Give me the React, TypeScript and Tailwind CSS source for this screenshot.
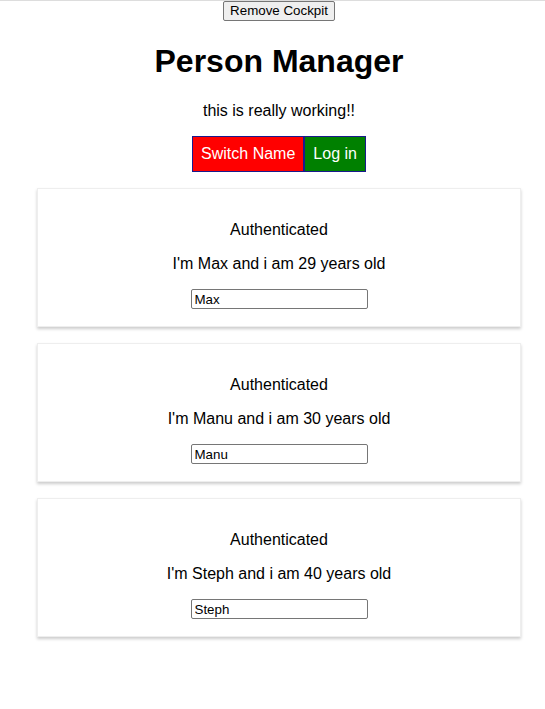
import React, { useState } from 'react';

interface Person {
  id: string;
  name: string;
  age: number;
}

const initialPersons: Person[] = [
  { id: 'a1', name: 'Max', age: 29 },
  { id: 'a2', name: 'Manu', age: 30 },
  { id: 'a3', name: 'Steph', age: 40 },
];

const PersonCard: React.FC<{ person: Person; onChange: (v: string) => void }> = ({ person, onChange }) => {
  return (
    <div className="w-[484px] mx-auto my-4 p-4 border border-[#eee] shadow-[0_2px_3px_#ccc] text-center">
      <p className="my-4 leading-[18px]">Authenticated</p>
      <p className="my-4 leading-[18px]">
        I'm {person.name} and i am {person.age} years old
      </p>
      <div className="h-[21px] flex justify-center">
        <input
          type="text"
          value={person.name}
          onChange={(e) => onChange(e.target.value)}
          className="w-[177px] h-[20px] px-[3px] border border-[#767676] rounded-[2px] text-[13.33px] text-black bg-white outline-none"
          style={{ fontFamily: '"Liberation Sans", Arial, sans-serif' }}
        />
      </div>
    </div>
  );
};

export default function App() {
  const [persons, setPersons] = useState<Person[]>(initialPersons);

  const changeName = (id: string, value: string) => {
    setPersons((prev) => prev.map((p) => (p.id === id ? { ...p, name: value } : p)));
  };

  return (
    <div
      className="min-h-[709px] bg-white border-t border-[#ddd] pl-[13px] text-center text-black text-base"
      style={{ fontFamily: '"Liberation Sans", Arial, sans-serif' }}
    >
      <div className="flex justify-center">
        <button className="h-[20px] px-[6px] bg-[#efefef] border border-[#767676] rounded-[2px] text-[13.33px] leading-none text-black">
          Remove Cockpit
        </button>
      </div>
      <h1 className="text-[32px] font-bold leading-[37px] mt-[22px] mb-[22px]">Person Manager</h1>
      <p className="my-4 leading-[18px]">this is really working!!</p>
      <div className="flex justify-center">
        <button className="h-[36px] px-2 bg-[#ff0000] text-white border border-[#1a1a8c] leading-[18px]">
          Switch Name
        </button>
        <button className="h-[36px] px-2 bg-[#008000] text-white border border-[#1a1a8c] leading-[18px]">
          Log in
        </button>
      </div>
      {persons.map((p) => (
        <PersonCard key={p.id} person={p} onChange={(v) => changeName(p.id, v)} />
      ))}
    </div>
  );
}
